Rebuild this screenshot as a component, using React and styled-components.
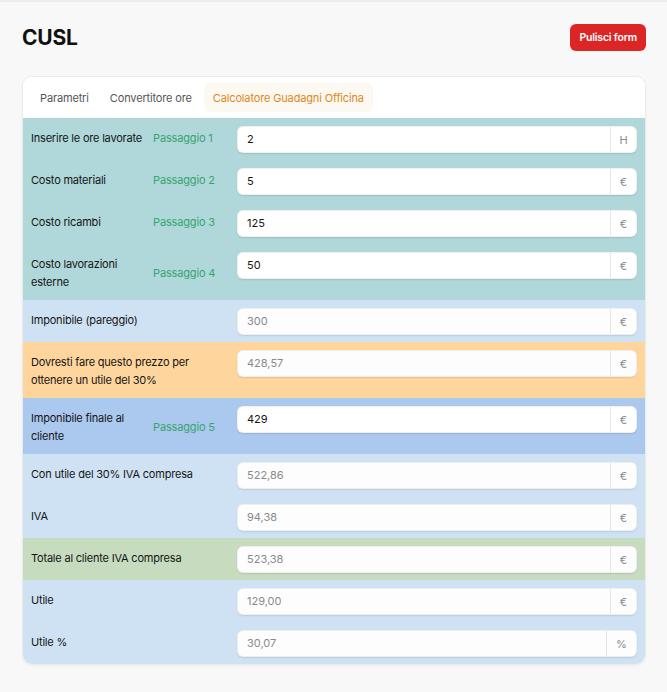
import React from "react";
import styled, { createGlobalStyle } from "styled-components";

const Global = createGlobalStyle`
  html, body { margin: 0; padding: 0; background: #f8f8f8; }
  body { font-family: Inter, "Noto Sans", "Liberation Sans", sans-serif; color: #1a1a1a; }
  * { box-sizing: border-box; }
`;

const Page = styled.div`
  min-height: 692px;
  border-top: 2px solid #ececec;
  padding: 22px 21px 28px 22px;
`;

const Header = styled.header`
  display: flex;
  align-items: center;
  justify-content: space-between;
  height: 27px;
  margin-bottom: 25px;
`;

const Title = styled.h1`
  margin: 0;
  font-size: 21px;
  font-weight: 700;
  letter-spacing: -0.2px;
  color: #111;
`;

const ClearButton = styled.button`
  height: 27px;
  padding: 0 9px;
  border: none;
  border-radius: 6px;
  background: #dc2626;
  color: #fff;
  font-family: inherit;
  font-size: 10.5px;
  font-weight: 600;
  letter-spacing: -0.2px;
`;

const Card = styled.section`
  background: #fff;
  border: 1px solid #ebebeb;
  border-radius: 10px;
  overflow: hidden;
  box-shadow: 0 1px 3px rgba(0, 0, 0, 0.04);
`;

const Tabs = styled.nav`
  display: flex;
  gap: 3px;
  padding: 6px 8px 6px;
  background: #fff;
`;

const Tab = styled.div`
  height: 29px;
  display: flex;
  align-items: center;
  padding: 0 9px;
  border-radius: 6px;
  font-size: 11px;
  letter-spacing: -0.15px;
  color: ${(p) => (p.$active ? "#e0881c" : "#555")};
  background: ${(p) => (p.$active ? "#fcf8f2" : "transparent")};
`;

const Row = styled.div`
  display: grid;
  grid-template-columns: 198px 1fr;
  column-gap: 8px;
  align-items: start;
  padding: 8px 8px 7px;
  background: ${(p) => p.$bg};
`;

const LabelCell = styled.div`
  display: flex;
  align-items: center;
  padding: 3px 0 2px;
  min-height: 23px;
`;

const Label = styled.span`
  flex: ${(p) => (p.$narrow ? "0 0 122px" : "1")};
  font-size: 11px;
  line-height: 18px;
  letter-spacing: -0.2px;
  color: #151515;
`;

const Step = styled.span`
  font-size: 11px;
  letter-spacing: -0.15px;
  color: #36a56f;
  white-space: nowrap;
`;

const InputGroup = styled.div`
  display: flex;
  height: 27px;
  border-radius: 6px;
  background: ${(p) => (p.$readOnly ? "#fdfdfd" : "#fff")};
  border: 1px solid rgba(0, 0, 0, 0.06);
  box-shadow: 0 1px 1.5px rgba(0, 0, 0, 0.1);
  overflow: hidden;
`;

const Field = styled.input`
  flex: 1;
  min-width: 0;
  border: none;
  outline: none;
  background: transparent;
  padding: 0 9px 1px;
  font-family: inherit;
  font-size: 11px;
  color: ${(p) => (p.readOnly ? "#8a8a8a" : "#151515")};
`;

const Addon = styled.span`
  flex: 0 0 ${(p) => (p.$wide ? "30px" : "26px")};
  display: flex;
  align-items: center;
  justify-content: center;
  border-left: 1px solid #e6e6e6;
  font-size: 11px;
  color: #8a8a8a;
`;

const C = {
  teal: "#b0d7d9",
  light: "#cfe2f3",
  orange: "#fed69d",
  blue: "#abc8ee",
  green: "#c7dcbf",
};

const rows = [
  { label: "Inserire le ore lavorate", step: "Passaggio 1", value: "2", unit: "H", bg: C.teal },
  { label: "Costo materiali", step: "Passaggio 2", value: "5", unit: "€", bg: C.teal },
  { label: "Costo ricambi", step: "Passaggio 3", value: "125", unit: "€", bg: C.teal },
  { label: "Costo lavorazioni esterne", step: "Passaggio 4", value: "50", unit: "€", bg: C.teal },
  { label: "Imponibile (pareggio)", value: "300", unit: "€", bg: C.light, ro: true },
  { label: "Dovresti fare questo prezzo per ottenere un utile del 30%", value: "428,57", unit: "€", bg: C.orange, ro: true },
  { label: "Imponibile finale al cliente", step: "Passaggio 5", value: "429", unit: "€", bg: C.blue },
  { label: "Con utile del 30% IVA compresa", value: "522,86", unit: "€", bg: C.light, ro: true },
  { label: "IVA", value: "94,38", unit: "€", bg: C.light, ro: true },
  { label: "Totale al cliente IVA compresa", value: "523,38", unit: "€", bg: C.green, ro: true },
  { label: "Utile", value: "129,00", unit: "€", bg: C.light, ro: true },
  { label: "Utile %", value: "30,07", unit: "%", bg: C.light, ro: true },
];

export default function App() {
  return (
    <Page>
      <Global />
      <Header>
        <Title>CUSL</Title>
        <ClearButton>Pulisci form</ClearButton>
      </Header>
      <Card>
        <Tabs>
          <Tab>Parametri</Tab>
          <Tab>Convertitore ore</Tab>
          <Tab $active>Calcolatore Guadagni Officina</Tab>
        </Tabs>
        {rows.map((r, i) => (
          <Row key={i} $bg={r.bg}>
            <LabelCell>
              <Label $narrow={!!r.step}>{r.label}</Label>
              {r.step && <Step>{r.step}</Step>}
            </LabelCell>
            <InputGroup $readOnly={r.ro}>
              <Field defaultValue={r.value} readOnly={r.ro} />
              <Addon $wide={r.unit === "%"}>{r.unit}</Addon>
            </InputGroup>
          </Row>
        ))}
      </Card>
    </Page>
  );
}
